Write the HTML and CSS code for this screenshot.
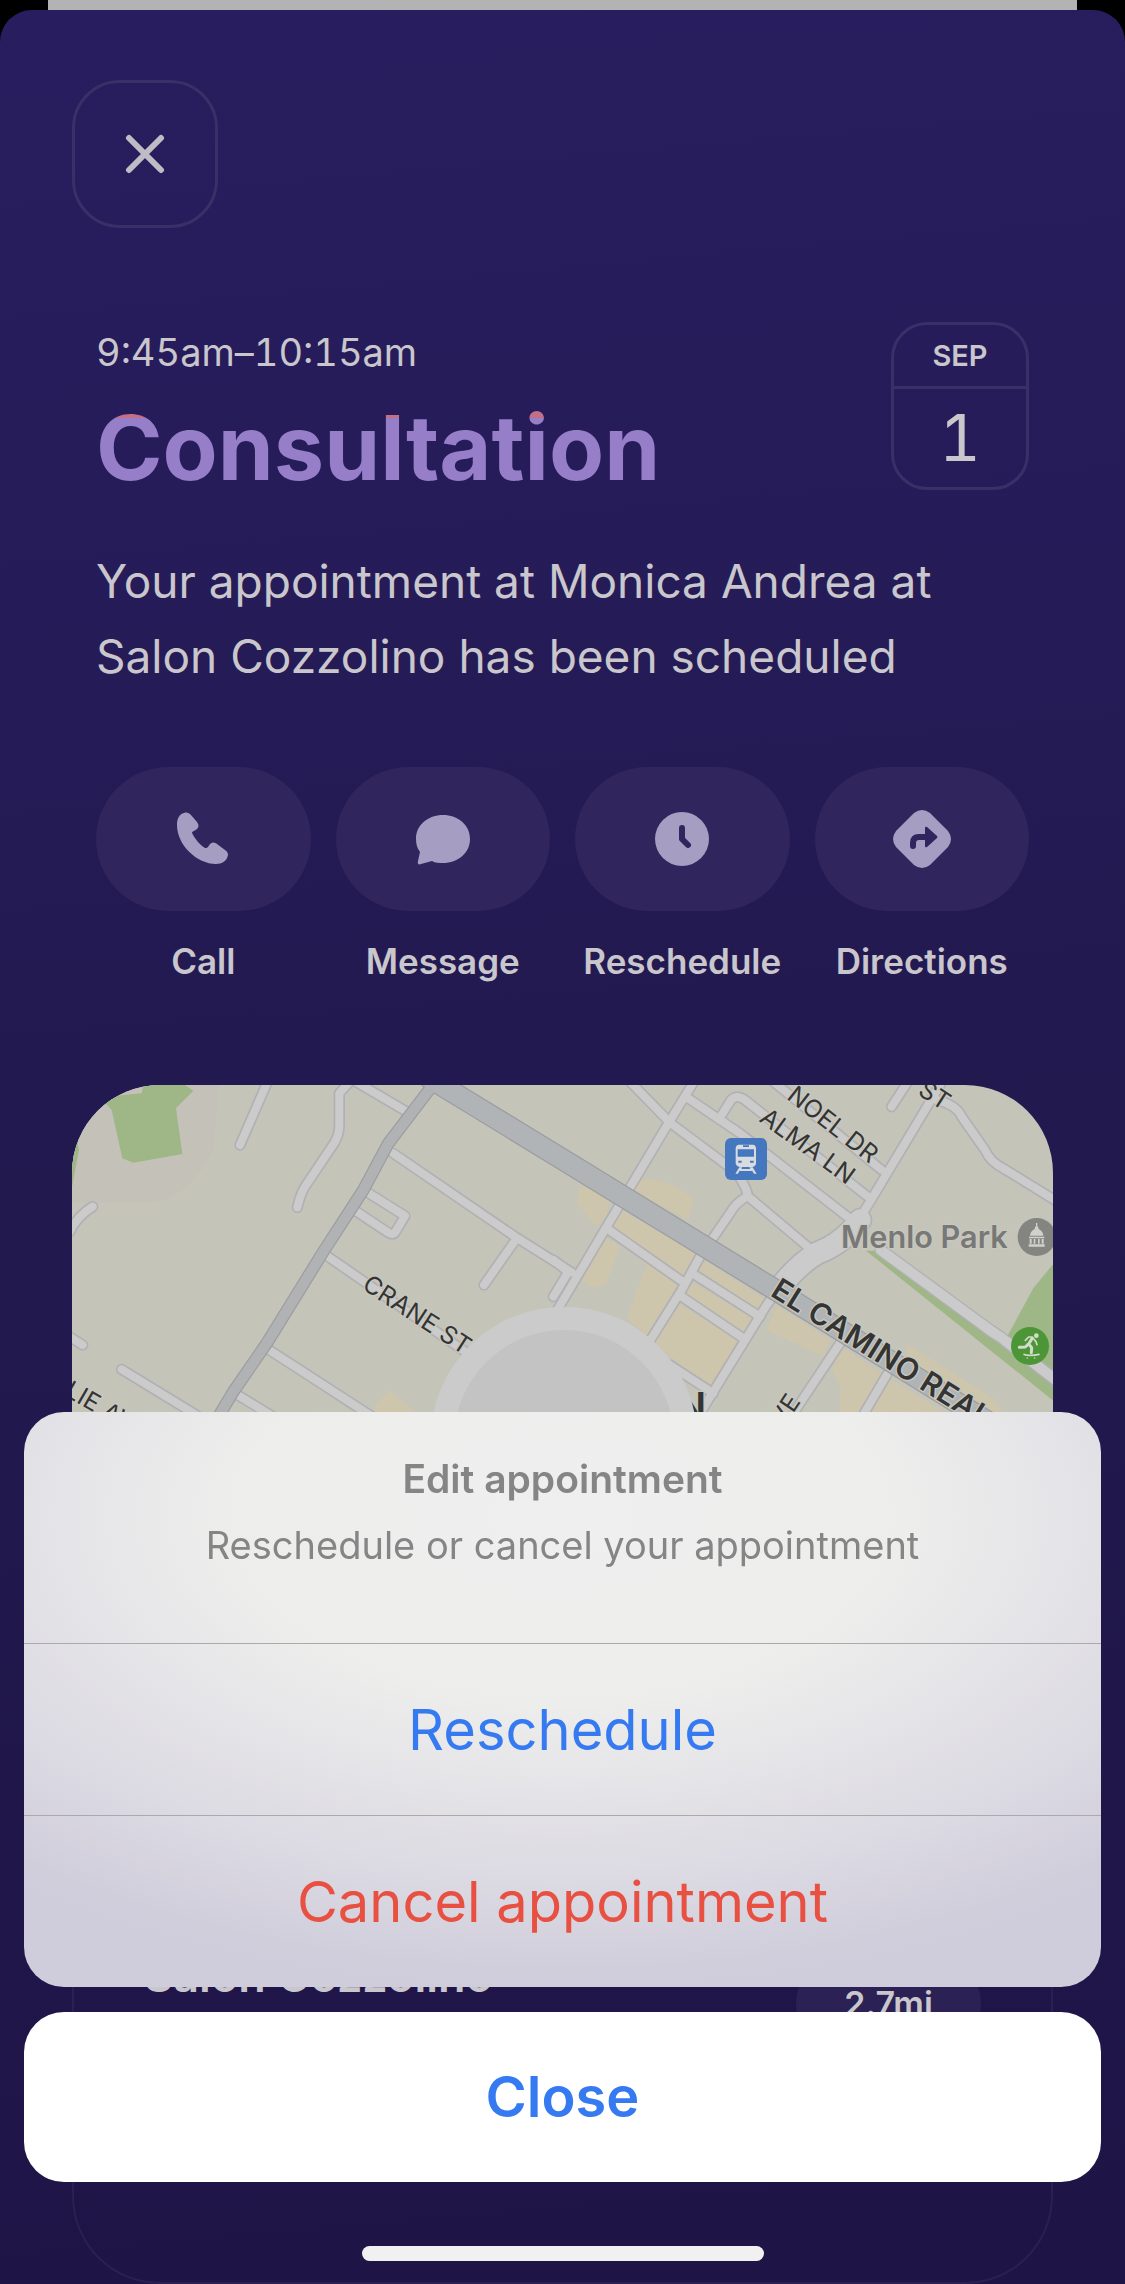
FILE: index.html
```html
<!DOCTYPE html>
<html lang="en">
<head>
    <meta charset="UTF-8">
    <meta name="viewport" content="width=device-width, initial-scale=1.0">
    <title>Consultation</title>
    <link rel="stylesheet" href="styles.css">
</head>
<body>

<main class="sheet">
    <button class="close-btn" type="button" aria-label="Close">
        <svg viewBox="0 0 40 40"><path d="M4 4L36 36M36 4L4 36"/></svg>
    </button>

    <section class="intro">
        <div class="heading-row">
            <div>
                <p class="time">9:45am–10:15am</p>
                <h1>Consultation</h1>
            </div>
            <div class="date">
                <span class="month">SEP</span>
                <span class="day">1</span>
            </div>
        </div>
        <p class="summary">Your appointment at Monica Andrea at Salon Cozzolino has been scheduled</p>

        <div class="actions">
            <button class="action" type="button">
                <span class="pill">
                    <svg viewBox="0 0 54 54"><path d="M8 1C3 2 1 7 1 13C1 33 21 52 40 52C46 52 51 49 52 43C52 41 51 39 49 38L41 32C38 30 36 30 34 32L32 35C31 36 30 36 29 36C24 33 19 27 16 21C16 20 17 19 18 19L21 17C23 15 23 13 21 10L15 3C13 1 11 0 8 1Z"/></svg>
                </span>
                Call
            </button>
            <button class="action" type="button">
                <span class="pill">
                    <svg viewBox="0 0 54 54"><path d="M27 3C12 3 0 13 0 27C0 32 1 36 4 40L2 49C1 52 3 53 5 52L16 49C19 51 23 51 27 51C42 51 54 41 54 27S42 3 27 3Z"/></svg>
                </span>
                Message
            </button>
            <button class="action" type="button">
                <span class="pill">
                    <svg viewBox="0 0 54 54"><circle cx="27" cy="27" r="27"/><path class="cut" d="M27 16V27L33 33"/></svg>
                </span>
                Reschedule
            </button>
            <button class="action" type="button">
                <span class="pill">
                    <svg class="wide" viewBox="0 0 58 58"><path d="M21 3Q29 -3 37 3L55 21Q61 29 55 37L37 55Q29 61 21 55L3 37Q-3 29 3 21Z"/><path class="cut" d="M20 36V33Q20 27 26 27H34"/><path class="cut-fill" d="M32 18Q32 16 34 17L44 26Q45 27 44 28L34 37Q32 38 32 36Z"/></svg>
                </span>
                Directions
            </button>
        </div>
    </section>

    <section class="place">
        <svg class="map" viewBox="36 45 2943 2100" preserveAspectRatio="xMidYMin slice">
            <defs>
                <g id="streets">
                    <path d="M625 30L540 225"/>
                    <path d="M865 40L838 70V165Q838 195 822 220L735 350Q722 370 712 412"/>
                    <path d="M870 25L1045 128"/>
                    <path d="M1000 250L1365 500L1535 607"/>
                    <path d="M1370 505L1272 645"/>
                    <path d="M930 372L1035 438L1005 488Q998 496 985 488L890 425"/>
                    <path d="M800 557L1230 855"/>
                    <path d="M620 835L960 1055"/>
                    <path d="M525 970L680 1065"/>
                    <path d="M185 898L450 1060"/>
                    <path d="M30 485Q50 440 98 410"/>
                    <path d="M20 795L68 825"/>
                    <path d="M1905 30L1825 160L1640 470L1480 740"/>
                    <path d="M1710 35L1830 158L2000 285Q2050 320 2065 380L2255 540"/>
                    <path d="M1885 85L2040 190L2375 450"/>
                    <path d="M1985 135L2010 95Q2025 70 2055 90L2430 385"/>
                    <path d="M2140 35L2465 300"/>
                    <path d="M2640 45L2430 395L2390 460"/>
                    <path d="M2180 625L2120 705L1920 1030"/>
                    <path d="M2630 90Q2690 105 2705 140L2775 240Q2790 275 2830 295L3000 400"/>
                    <path d="M2495 110L2550 25"/>
                    <path d="M2060 380Q2025 400 2010 430L1920 560L1865 660L1765 820"/>
                    <path d="M1640 475L1875 640"/>
                    <path d="M1905 615L2100 740"/>
                    <path d="M1865 680L2050 805"/>
                    <path d="M1830 885L1960 970"/>
                    <path d="M2340 820L2200 1030"/>
                    <path d="M2480 915L2395 1060"/>
                    <path d="M1480 570L1525 605L1480 680"/>
                </g>
                <g id="wide-streets">
                    <path d="M2400 450Q2350 520 2270 550Q2220 580 2170 640"/>
                </g>
            </defs>

            <rect class="land" x="0" y="0" width="3100" height="2200"/>
            <path class="hospital" d="M0 0H480L460 240Q380 400 250 400H0Z"/>
            <path class="park" d="M120 82L245 70L250 45H375L400 62L348 115L367 252L220 278L187 265L155 120Z"/>
            <path class="park" d="M0 190H45L57 240L36 350H0Z"/>

            <!-- shopping blocks -->
            <path class="shops" d="M1560 345L1650 385L1640 440L1610 470L1550 400Z"/>
            <path class="shops" d="M1740 330Q1820 320 1900 385L1885 450L1715 360Z"/>
            <path class="shops" d="M1675 415L1930 560L1870 640L1640 475Z"/>
            <path class="shops" d="M1635 500L1680 530L1640 640L1600 655L1565 630Z"/>
            <path class="shops" d="M1760 580L1865 640L1760 800L1700 745Z"/>
            <path class="shops" d="M1930 570L2120 690L2090 740L1915 610Z"/>
            <path class="shops" d="M1890 635L2090 745L2060 800L1870 680Z"/>
            <path class="shops" d="M1855 700L2040 815L1955 965L1780 815Z"/>
            <path class="shops" d="M2150 705L2310 810L2290 860L2120 780Z"/>
            <path class="shops" d="M2345 830L2470 915L2400 1060H2340V950L2315 900Z"/>
            <path class="shops" d="M2490 925L2680 1045H2420Z"/>
            <path class="shops" d="M2540 820L2800 985L2850 1060L2700 1010L2540 880Z"/>
            <path class="shops" d="M950 1000L990 960L1060 1020V1060H930Z"/>

            <path class="park" d="M2985 575L2920 655L2825 830L3000 930Z"/>
            <path class="park" d="M2418 542L2740 800L3000 1008V950L2760 770L2445 542Z"/>

            <use href="#streets" class="casing"/>
            <use href="#wide-streets" class="casing-wide"/>
            <path class="casing rail" d="M2462 540L2765 762Q2790 782 2820 800L3000 940"/>
            <use href="#streets" class="street"/>
            <use href="#wide-streets" class="street-wide"/>
            <path class="street rail-fill" d="M2462 540L2765 762Q2790 782 2820 800L3000 940"/>

            <path class="avenue-edge" d="M1130 30L985 220L910 360L790 545L620 820L520 965L445 1090"/>
            <path class="camino-edge" d="M1110 25L1560 300L2130 650L2800 1065"/>
            <path class="avenue" d="M1130 30L985 220L910 360L790 545L620 820L520 965L445 1090"/>
            <path class="camino" d="M1110 25L1560 300L2130 650L2800 1065"/>

            <g class="street-name">
                <text transform="translate(903 655) rotate(33)">CRANE ST</text>
                <text transform="translate(2177 85) rotate(38)">NOEL DR</text>
                <text transform="translate(2095 152) rotate(36)">ALMA LN</text>
                <text transform="translate(2570 72) rotate(33)">ST</text>
                <text transform="translate(10 975) rotate(30)">LIE AVE</text>
                <text transform="translate(2145 1112) rotate(-56)">AVE</text>
            </g>
            <text class="camino-name" transform="translate(2128 675) rotate(32)">EL CAMINO REAL</text>
            <text class="city-name" x="2343" y="535">Menlo Park</text>
            <text class="town" x="1850" y="1050">N</text>

            <!-- train station -->
            <g transform="translate(1995 204)">
                <rect width="126" height="126" rx="18" fill="#4477bd"/>
                <path fill="#d8dbe0" fill-rule="evenodd" d="M42 20H84Q92 21 93 30V76Q92 86 82 87H44Q34 86 32 76V30Q33 21 42 20ZM54 22V27H72V22ZM38 34V56H87V34ZM40 68V74H50V68ZM75 68V74H86V68ZM43 88H52L49 93H76L73 88H83L95 107H87L82 99H43L39 107H31Z"/>
            </g>

            <!-- city hall -->
            <g transform="translate(2930 501)">
                <circle r="57" fill="#848480"/>
                <path fill="#d0d0cc" d="M-2 -42H2V-32Q6 -30 6 -24Q19 -18 20 -4H-20Q-19 -18 -6 -24Q-6 -30 -2 -32ZM-23 -1H23V4H-23ZM-21 6H-15V20H-21ZM-9 6H-4V20H-9ZM4 6H9V20H4ZM15 6H21V20H15ZM-24 22H24V29H-24Z"/>
            </g>

            <!-- skate park -->
            <g transform="translate(2910 828)">
                <circle r="57" fill="#4c9637"/>
                <circle cx="19" cy="-31" r="7" fill="#d3dccc"/>
                <path fill="none" stroke="#d3dccc" stroke-width="5" stroke-linecap="round" stroke-linejoin="round" d="M-14 -17L-4 -27H7L18 -13L21 -4M-18 25Q-16 28 0 28T27 25M-8 36V36M14 36V36"/>
                <path fill="none" stroke="#d3dccc" stroke-width="9" stroke-linecap="round" stroke-linejoin="round" d="M6 -22L-4 -6L5 5L4 20M-5 -6L-14 3L-32 4"/>
            </g>

            <circle cx="1512" cy="1110" r="400" fill="#cbcbcb"/>
            <circle cx="1512" cy="1110" r="330" fill="#c3c3c3"/>
        </svg>
        <div class="place-info">
            <h2>Salon Cozzolino</h2>
            <span class="distance">2.7mi</span>
        </div>
    </section>
</main>

<div class="action-sheet">
    <div class="options">
        <div class="options-head">
            <h3>Edit appointment</h3>
            <p>Reschedule or cancel your appointment</p>
        </div>
        <button class="option" type="button">Reschedule</button>
        <button class="option danger" type="button">Cancel appointment</button>
    </div>
    <button class="option dismiss" type="button">Close</button>
    <div class="home-bar"></div>
</div>

</body>
</html>
```
FILE: styles.css
```css
* {
    box-sizing: border-box;
    margin: 0;
}

body {
    font-family: Inter, "Liberation Sans", sans-serif;
    min-height: 100vh;
    padding-top: 10px;
    display: flex;
    background: linear-gradient(#b3b3b3, #b3b3b3) center top / calc(100% - 96px) 10px no-repeat #000;
    color: #c9c6cc;
}

button {
    font-family: inherit;
    color: inherit;
    border: none;
    background: none;
    padding: 0;
    cursor: pointer;
}

.sheet {
    flex: 1;
    min-width: 0;
    display: flex;
    flex-direction: column;
    padding: 70px 72px 0;
    border-radius: 32px 32px 0 0;
    background: linear-gradient(175deg, #281d5e 0%, #261c5a 20%, #22194f 50%, #1e1446 100%);
}

.close-btn {
    width: 146px;
    height: 148px;
    border: 3px solid #3b2f68;
    border-radius: 48px;
    display: flex;
    align-items: center;
    justify-content: center;
}

.close-btn svg {
    width: 40px;
    height: 40px;
    fill: none;
    stroke: #bfbcc6;
    stroke-width: 6;
    stroke-linecap: round;
}

.intro {
    padding: 94px 24px 0;
}

.heading-row {
    display: flex;
    justify-content: space-between;
    align-items: flex-start;
}

.time {
    margin-top: 4px;
    font-size: 38px;
    line-height: 52px;
    font-variant-numeric: tabular-nums;
}

h1 {
    margin-top: 22px;
    font-size: 90px;
    line-height: 96px;
    font-weight: 700;
    background: linear-gradient(#c36f88 18px, #967fc8 18px);
    background-clip: text;
    -webkit-background-clip: text;
    color: transparent;
}

.date {
    width: 138px;
    height: 168px;
    border: 3px solid #3b2f68;
    border-radius: 36px;
    display: flex;
    flex-direction: column;
    text-align: center;
}

.month {
    font-size: 29px;
    font-weight: 600;
    line-height: 61px;
    border-bottom: 3px solid #3b2f68;
}

.day {
    font-size: 64px;
    line-height: 98px;
    font-variant-numeric: tabular-nums;
}

.summary {
    margin-top: 48px;
    font-size: 46px;
    line-height: 75px;
}

.actions {
    display: grid;
    grid-template-columns: repeat(4, 1fr);
    gap: 25px;
    margin-top: 73px;
}

.action {
    display: flex;
    flex-direction: column;
    align-items: center;
    gap: 28px;
    font-size: 35px;
    line-height: 44px;
    font-weight: 600;
}

.pill {
    width: 100%;
    height: 144px;
    border-radius: 72px;
    background: #30255c;
    display: flex;
    align-items: center;
    justify-content: center;
}

.pill svg {
    width: 54px;
    height: 54px;
    fill: #a69dc3;
}

.pill .wide {
    width: 58px;
    height: 58px;
}

.pill .cut {
    fill: none;
    stroke: #30255c;
    stroke-width: 6;
    stroke-linecap: round;
    stroke-linejoin: round;
}

.pill .cut-fill {
    fill: #30255c;
}

.place {
    flex: 1;
    margin-top: 102px;
    border-radius: 88px;
    box-shadow: inset 0 0 0 2px #2a2052;
    overflow: hidden;
}

.map {
    display: block;
    width: 100%;
    height: 700px;
}

.land { fill: #c4c4b9; }
.hospital { fill: #c4c1b9; }
.park { fill: #9fb686; }
.shops { fill: #cdc5ac; }

.casing, .casing-wide, .street, .street-wide,
.avenue, .avenue-edge, .camino, .camino-edge {
    fill: none;
    stroke-linecap: round;
    stroke-linejoin: round;
}

.casing { stroke: #b1b1b5; stroke-width: 34px; }
.street { stroke: #cbcbcb; stroke-width: 24px; }
.casing-wide { stroke: #b1b1b5; stroke-width: 74px; }
.street-wide { stroke: #cbcbcb; stroke-width: 64px; }
.rail { stroke-width: 38px; }
.rail-fill { stroke-width: 30px; }
.avenue-edge { stroke: #9b9ca1; stroke-width: 38px; }
.avenue { stroke: #b0b2b4; stroke-width: 31px; }
.camino-edge { stroke: #9b9ca1; stroke-width: 66px; }
.camino { stroke: #b0b4b6; stroke-width: 59px; }

.street-name text, .camino-name, .city-name, .town {
    fill: #343432;
    stroke: #c8c8c0;
    stroke-width: 8px;
    paint-order: stroke;
}

.street-name text { font-size: 74px; }
.camino-name { font-size: 90px; font-weight: 600; }
.city-name { font-size: 92px; font-weight: 600; fill: #787876; }
.town { font-size: 116px; font-weight: 600; }

.place-info {
    display: flex;
    justify-content: space-between;
    align-items: flex-start;
    padding: 161px 72px 0;
}

.place-info h2 {
    font-size: 45px;
    line-height: 60px;
    font-weight: 600;
}

.distance {
    width: 185px;
    height: 100px;
    margin-top: 8px;
    border-radius: 50px;
    background: #2b2155;
    font-size: 34px;
    line-height: 100px;
    font-weight: 600;
    text-align: center;
}

/* Action sheet over the page */
.action-sheet {
    position: fixed;
    left: 24px;
    right: 24px;
    bottom: 23px;
}

.options {
    border-radius: 40px;
    overflow: hidden;
    background: radial-gradient(ellipse 80% 82% at 50% 18%, #efefef 0%, #ededec 40%, #dddbe3 75%, #cfccdb 100%);
}

.options-head {
    height: 231px;
    padding-top: 43px;
    text-align: center;
    font-size: 38px;
    line-height: 48px;
    color: #858585;
}

.options-head h3 {
    font-size: 39px;
    font-weight: 600;
}

.options-head p {
    margin-top: 18px;
}

.option {
    display: block;
    width: 100%;
    height: 172px;
    border-top: 1px solid #aaaaab;
    font-size: 56px;
    color: #367af2;
}

.option.danger {
    color: #e85142;
}

.option.dismiss {
    height: 170px;
    margin-top: 25px;
    border: none;
    border-radius: 40px;
    background: #fff;
    font-weight: 600;
}

.home-bar {
    width: 402px;
    height: 15px;
    margin: 64px auto 0;
    border-radius: 8px;
    background: #f1f1f1;
}
```
